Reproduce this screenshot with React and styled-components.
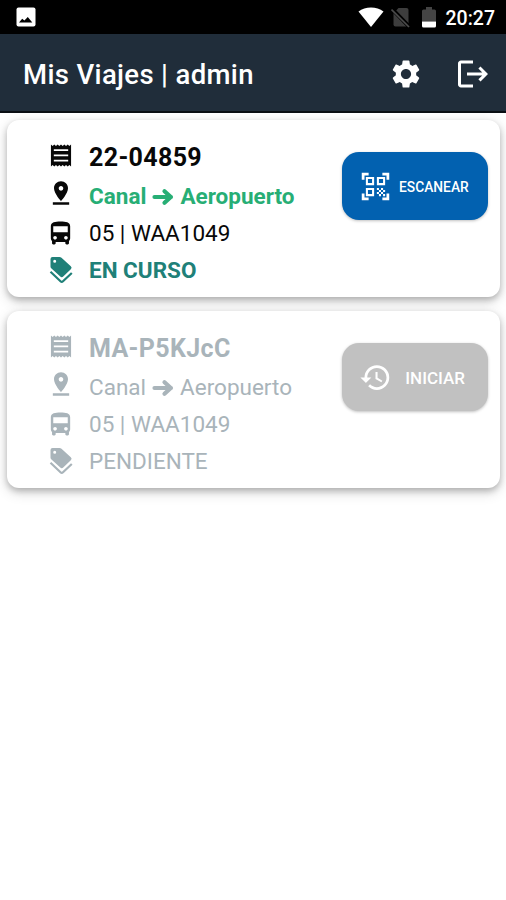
import React from 'react';
import styled, { createGlobalStyle } from 'styled-components';
import {
    MdDirectionsBus,
    MdHistory,
    MdLogout,
    MdPinDrop,
    MdQrCodeScanner,
    MdSettings,
} from 'react-icons/md';

const trips = [
    { code: '22-04859', from: 'Canal', to: 'Aeropuerto', bus: '05 | WAA1049', status: 'EN CURSO', active: true },
    { code: 'MA-P5KJcC', from: 'Canal', to: 'Aeropuerto', bus: '05 | WAA1049', status: 'PENDIENTE', active: false },
];

const PhotoIcon = () => (
    <svg width="20" height="20" viewBox="0 0 20 20">
        <rect x="0.5" y="0.5" width="19" height="19" rx="2" fill="#fff" />
        <path d="M3 15.500l3.200-3.700 2.200 1.800 3.400-3.600 4.500 5.500z" fill="#000" />
    </svg>
);

const WifiIcon = () => (
    <svg width="26" height="21" viewBox="0 0 26 21">
        <path d="M0.500 4.400C4 1.700 8.300 0.500 13 0.500S22 1.700 25.500 4.400L13 20z" fill="#fff" />
    </svg>
);

const NoSimIcon = () => (
    <svg width="20" height="21" viewBox="0 0 20 21">
        <path d="M2.500 6.500L7.500 1H15.500a2 2 0 0 1 2 2v14.500a2 2 0 0 1-2 2H4.500a2 2 0 0 1-2-2z" fill="#3d3d3d" />
        <path d="M0.500 1.500L18.500 20" stroke="#000" strokeWidth="4" />
        <path d="M0.500 2.500L18 20" stroke="#4c4c4c" strokeWidth="1.700" />
    </svg>
);

const BatteryIcon = () => (
    <svg width="14" height="21" viewBox="0 0 14 21">
        <path d="M0 4a1.500 1.500 0 0 1 1.500-1.500H4V0h6v2.500h2.500A1.500 1.500 0 0 1 14 4v10.500H0z" fill="#444" />
        <path d="M0 14.500h14V19a1.500 1.500 0 0 1-1.500 1.500h-11A1.500 1.500 0 0 1 0 19z" fill="#fff" />
    </svg>
);

const ReceiptIcon = () => (
    <svg width="22" height="23" viewBox="0 0 22 24">
        <path
            fillRule="evenodd"
            fill="currentColor"
            d="M0.500 0.500l1.750 1.500 1.750-1.500 1.750 1.500 1.750-1.500 1.750 1.500 1.750-1.500 1.750 1.500 1.750-1.500 1.750 1.500 1.750-1.500 1.750 1.500 1.750-1.500v23l-1.750-1.500-1.750 1.500-1.750-1.500-1.750 1.500-1.750-1.500-1.750 1.500-1.750-1.500-1.750 1.500-1.750-1.500-1.750 1.500-1.750-1.500-1.750 1.500zM3.500 5.400v1.900h15v-1.900zM3.500 10.900v1.900h15v-1.900zM3.500 16.400v1.900h15v-1.900z"
        />
    </svg>
);

const TagsIcon = () => (
    <svg width="24" height="28" viewBox="0 0 24 28">
        <path
            fillRule="evenodd"
            fill="currentColor"
            d="M1.500 3A2 2 0 0 1 3.500 1H10.500a3 3 0 0 1 2 0.800L21.800 10.200a2 2 0 0 1 0 3L14.500 20.300a2.500 2.500 0 0 1-3.500 0L2.200 12.200a2.500 2.500 0 0 1-0.700-1.800zM5.700 3.800a1.500 1.500 0 1 0 0 3a1.500 1.500 0 1 0 0-3z"
        />
        <path d="M1.500 15.800L11.500 25.200a1.800 1.800 0 0 0 2.500 0L22.800 17" fill="none" stroke="currentColor" strokeWidth="2.200" />
    </svg>
);

const ArrowIcon = () => (
    <Arrow width="22" height="18" viewBox="0 0 22 18">
        <path
            d="M2.500 9H19M12.500 3.200l6.300 5.800-6.300 5.800"
            fill="none"
            stroke="currentColor"
            strokeWidth="4.200"
            strokeLinecap="round"
            strokeLinejoin="round"
        />
    </Arrow>
);

const TripCard = ({ trip }) => {
    const { code, from, to, bus, status, active } = trip;

    return (
        <Card $active={active}>
            <Details>
                <Row>
                    <IconCell><ReceiptIcon /></IconCell>
                    <Code>{code}</Code>
                </Row>
                <Row>
                    <IconCell><MdPinDrop size={28} /></IconCell>
                    <Route $active={active}>
                        <span>{from}</span>
                        <ArrowIcon />
                        <span>{to}</span>
                    </Route>
                </Row>
                <Row>
                    <IconCell $drop={6}><MdDirectionsBus size={29} /></IconCell>
                    <Text>{bus}</Text>
                </Row>
                <StatusRow $active={active}>
                    <IconCell><TagsIcon /></IconCell>
                    <Text>{status}</Text>
                </StatusRow>
            </Details>
            <ActionButton $active={active}>
                {active ? <MdQrCodeScanner size={33} /> : <MdHistory size={33} />}
                <span>{active ? 'ESCANEAR' : 'INICIAR'}</span>
            </ActionButton>
        </Card>
    );
};

const App = () => (
    <Screen>
        <GlobalStyle />
        <StatusBar>
            <PhotoIcon />
            <StatusIcons>
                <WifiIcon />
                <NoSimIcon />
                <BatteryIcon />
                <Clock>20:27</Clock>
            </StatusIcons>
        </StatusBar>
        <Header>
            <h1>Mis Viajes | admin</h1>
            <HeaderActions>
                <MdSettings size={34} />
                <MdLogout size={36} />
            </HeaderActions>
        </Header>
        <TripList>
            {trips.map((trip) => <TripCard key={trip.code} trip={trip} />)}
        </TripList>
    </Screen>
);

const GlobalStyle = createGlobalStyle`
    * {
        box-sizing: border-box;
    }
    body {
        margin: 0;
        background-color: #fff;
        font-family: Roboto, "Liberation Sans", sans-serif;
    }
    svg {
        display: block;
        flex-shrink: 0;
    }
`
const Screen = styled.div`
    height: 900px;
    overflow: hidden;
    background-color: #fff;
`
const StatusBar = styled.div`
    height: 34px;
    display: flex;
    align-items: center;
    justify-content: space-between;
    padding: 0 11px 0 16px;
    background-color: #000;
    color: #fff;
`
const StatusIcons = styled.div`
    display: flex;
    align-items: center;
    svg:nth-child(2) {
        margin-left: 7px;
    }
    svg:nth-child(3) {
        margin-left: 11px;
    }
`
const Clock = styled.span`
    margin: 3px 0 0 10px;
    font-size: 19.500px;
    font-weight: 500;
`
const Header = styled.header`
    height: 79px;
    display: flex;
    align-items: center;
    justify-content: space-between;
    padding: 2px 15px 0 23px;
    background-color: #202d3a;
    border-bottom: 2px solid #0a0f14;
    color: #fff;
    h1 {
        margin: 2px 0 0;
        font-size: 27.500px;
        font-weight: 500;
        letter-spacing: 0.350px;
    }
`
const HeaderActions = styled.div`
    display: flex;
    align-items: center;
    gap: 32.500px;
`
const TripList = styled.main`
    display: flex;
    flex-direction: column;
    gap: 14px;
    padding: 7px 6px 0 7px;
`
const Card = styled.section`
    height: 177px;
    display: flex;
    justify-content: space-between;
    padding: 17px 12px 0 40px;
    border-radius: 12px;
    background-color: #fff;
    color: ${props => props.$active ? '#080808' : '#a9b4ba'};
    box-shadow: 0 3px 6px rgba(0, 0, 0, 0.22), 0 4px 14px rgba(0, 0, 0, 0.16);
`
const Details = styled.div`
    display: flex;
    flex-direction: column;
`
const Row = styled.div`
    height: 37.500px;
    display: flex;
    align-items: center;
    gap: 15px;
    white-space: nowrap;
`
const StatusRow = styled(Row)`
    padding-top: 3px;
    color: ${props => props.$active ? '#208078' : 'inherit'};
    font-weight: ${props => props.$active ? 700 : 400};
`
const IconCell = styled.div`
    width: 27px;
    display: flex;
    justify-content: center;
    padding-top: ${props => props.$drop || 0}px;
`
const Code = styled.span`
    padding-top: 3px;
    font-size: 25px;
    font-weight: 700;
    letter-spacing: 0.350px;
`
const Text = styled.span`
    padding-top: 4px;
    font-size: 22.500px;
    ${StatusRow} & {
        padding-top: 1px;
    }
`
const Route = styled(Text)`
    display: flex;
    align-items: center;
    gap: 6px;
    padding-top: 5px;
    color: ${props => props.$active ? '#27ae75' : 'inherit'};
    font-weight: ${props => props.$active ? 700 : 400};
`
const Arrow = styled.svg`
    margin-top: 2px;
`
const ActionButton = styled.button`
    width: 146px;
    height: 68px;
    display: flex;
    align-items: center;
    justify-content: ${props => props.$active ? 'flex-start' : 'space-between'};
    gap: 7px;
    margin: 15px 0 0;
    padding: ${props => props.$active ? '0 0 0 17px' : '0 23px 0 17px'};
    border: 0;
    border-radius: 17px;
    background-color: ${props => props.$active ? '#0261b0' : '#c1c1c1'};
    box-shadow: 0 1px 3px rgba(0, 0, 0, 0.25);
    color: #fff;
    font-family: inherit;
    font-size: ${props => props.$active ? '13.800px' : '17px'};
    font-weight: 500;
    span {
        padding-top: 2px;
    }
`

export default App;
